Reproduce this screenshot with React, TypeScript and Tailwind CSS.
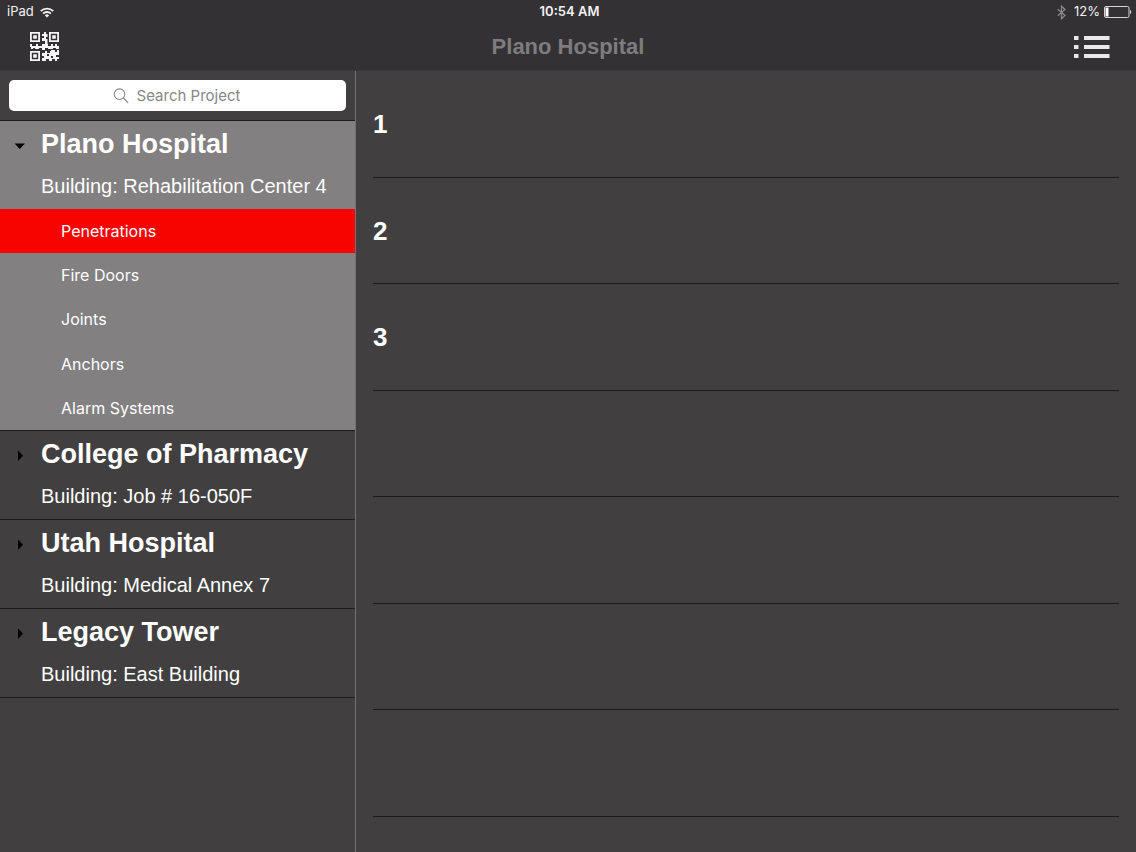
import { useState } from "react";

const projects = [
  {
    name: "Plano Hospital",
    building: "Rehabilitation Center 4",
    modules: ["Penetrations", "Fire Doors", "Joints", "Anchors", "Alarm Systems"],
  },
  { name: "College of Pharmacy", building: "Job # 16-050F", modules: [] },
  { name: "Utah Hospital", building: "Medical Annex 7", modules: [] },
  { name: "Legacy Tower", building: "East Building", modules: [] },
];

const floors = ["1", "2", "3", "", "", "", ""];

function WifiIcon() {
  return (
    <svg width="14" height="11" viewBox="0 0 14 11" fill="none" stroke="#f4f2f4" strokeWidth="1.8">
      <path d="M0.8 4.2a8.8 8.8 0 0 1 12.4 0" />
      <path d="M3.1 6.6a5.5 5.5 0 0 1 7.8 0" />
      <path d="M7 10.6 4.9 8.4a3 3 0 0 1 4.2 0z" fill="#f4f2f4" stroke="none" />
    </svg>
  );
}

function BluetoothIcon() {
  return (
    <svg width="9" height="15" viewBox="0 0 9 15" fill="none" stroke="#8a888a" strokeWidth="1.3">
      <path d="M0.8 4.2 8 10.6 4.5 13.8V1.2L8 4.4 0.8 10.8" />
    </svg>
  );
}

function BatteryIcon() {
  return (
    <svg width="28" height="12" viewBox="0 0 28 12">
      <rect x="0.5" y="0.5" width="24.5" height="11" rx="1.5" fill="none" stroke="#d5d3d5" />
      <rect x="1.5" y="1.5" width="3" height="9" fill="#fff" />
      <path d="M26 4c1.6.4 1.6 3.6 0 4z" fill="#d5d3d5" />
    </svg>
  );
}

function QrIcon() {
  return (
    <svg width="30" height="30" viewBox="0 0 30 30" fill="#f6f4f6">
      <path
        fillRule="evenodd"
        d="M0 0h10v10H0zM1.8 1.8v6.4h6.4V1.8zM19 0h10v10H19zM20.8 1.8v6.4h6.4V1.8zM0 19h10v10H0zM1.8 20.8v6.4h6.4v-6.4z"
      />
      <path d="M3.2 3.2h3.6v3.6H3.2zM22.2 3.2h3.6v3.6h-3.6zM3.2 22.2h3.6v3.6H3.2z" />
      <path d="M14 0h2v2h1.5v3H16v2h1.5v5H15V9h-3V6h2V4h-2V2h2z" />
      <path d="M0 12h2v2h4v-2h2v2h4v-2h6v2h3v-2h2v2h2v-2h2v2h2v3h-3v-1h-3v1h-5v-1h-3v2h-3v-2h-3v1h-3v-1H7v1H5v-1H3v1H1v-2H0z" />
      <path d="M21 18h4v2h2v-2h2v5h-3v2h3v2h-2v2h-2v-2h-3v2h-3v-2h-3v2h-4v-3h2v-2h-2v-3h3v-2h2v2h3v-2h1z" />
      <path d="M17 22h2v2h-2zM21 24h2v2h-2z" fill="#333134" />
    </svg>
  );
}

function ListIcon() {
  return (
    <svg width="36" height="24" viewBox="0 0 36 24" fill="#e9e9eb">
      <path d="M0 1h4.5v4H0zM10 1h25.5v4H10zM0 10h4.5v4H0zM10 10h25.5v4H10zM0 19h4.5v4H0zM10 19h25.5v4H10z" />
    </svg>
  );
}

function SearchIcon() {
  return (
    <svg width="16" height="16" viewBox="0 0 16 16" fill="none" stroke="#88868a" strokeWidth="1.1">
      <circle cx="6.5" cy="6.2" r="5.3" />
      <path d="m10.4 10 4.8 4.8" />
    </svg>
  );
}

function Disclosure({ open }: { open: boolean }) {
  return (
    <svg width="12" height="12" viewBox="0 0 12 12" fill="#000">
      {open ? <path d="M0.5 3.5h10.5L5.75 9z" /> : <path d="M4 0.5v10.5l5-5.25z" />}
    </svg>
  );
}

export default function App() {
  const [openProject, setOpenProject] = useState("Plano Hospital");
  const [activeModule, setActiveModule] = useState("Penetrations");

  return (
    <div className="flex min-h-screen flex-col bg-[#413f40] font-['Liberation_Sans',Arial,sans-serif] text-white">
      <header className="border-b border-[#3a383a] bg-[#333134]">
        {/* Status bar */}
        <div className="grid h-6 grid-cols-3 items-center pr-1 pl-[7px] font-[Inter,sans-serif] text-[13px] text-[#f4f2f4]">
          <div className="flex items-center gap-[6px]">
            <span>iPad</span>
            <WifiIcon />
          </div>
          <span className="text-center font-semibold">10:54 AM</span>
          <div className="flex items-center justify-end gap-1">
            <BluetoothIcon />
            <span className="pl-1">12%</span>
            <BatteryIcon />
          </div>
        </div>

        {/* Nav bar */}
        <div className="grid h-[46px] grid-cols-3 items-center px-[26px]">
          <button aria-label="Scan code" className="justify-self-start pl-1">
            <QrIcon />
          </button>
          <h1 className="pb-0.5 text-center text-[22px] font-bold text-[#7e7c7e]">{openProject}</h1>
          <button aria-label="Menu" className="justify-self-end">
            <ListIcon />
          </button>
        </div>
      </header>

      <div className="flex flex-1">
        <aside className="w-[356px] shrink-0 border-r border-[#737173]">
          <div className="border-b border-[#1c1a1c] px-[9px] py-[9px]">
            <label className="flex h-[31px] items-center justify-center gap-2 rounded-[5px] bg-white pr-0.5">
              <SearchIcon />
              <input
                type="text"
                aria-label="Search Project"
                placeholder="Search Project"
                className="field-sizing-content bg-transparent pt-0.5 font-[Inter,sans-serif] text-[15px] text-[#333134] outline-none placeholder:text-[#88868a]"
              />
            </label>
          </div>

          {projects.map(({ name, building, modules }) => {
            const isOpen = openProject === name;
            return (
              <section
                key={name}
                className={`border-b border-[#1c1a1c] ${isOpen ? "bg-[#828081]" : ""}`}
              >
                <button
                  onClick={() => setOpenProject(name)}
                  aria-expanded={isOpen}
                  className="flex h-[88px] w-full items-start pl-[14px] text-left"
                >
                  <span className="flex h-[50px] w-[27px] items-center">
                    <Disclosure open={isOpen} />
                  </span>
                  <span className="flex flex-col">
                    <span className="text-[27px] leading-[47px] font-bold">{name}</span>
                    <span className="text-[20px] leading-[37px]">Building: {building}</span>
                  </span>
                </button>
                {isOpen && modules.length > 0 && (
                  <ul className="grid h-[221px] grid-rows-5">
                    {modules.map((item) => (
                      <li key={item} className="grid">
                        <button
                          onClick={() => setActiveModule(item)}
                          className={`pl-[61px] text-left font-[Inter,sans-serif] text-[16px] ${
                            activeModule === item ? "bg-[#f50400]" : ""
                          }`}
                        >
                          {item}
                        </button>
                      </li>
                    ))}
                  </ul>
                )}
              </section>
            );
          })}
        </aside>

        <main className="flex flex-1 flex-col px-[17px] pb-[35px]">
          {floors.map((floor, i) => (
            <div
              key={i}
              className="flex flex-1 items-center border-b border-[#1c1a1c] pt-0.5 text-[26px] font-bold"
            >
              {floor}
            </div>
          ))}
        </main>
      </div>
    </div>
  );
}
